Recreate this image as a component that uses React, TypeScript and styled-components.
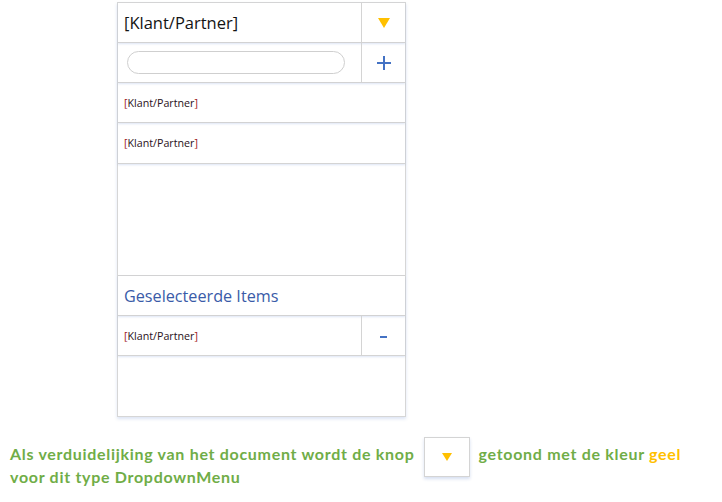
import React from "react";
import styled, { createGlobalStyle } from "styled-components";

const Global = createGlobalStyle`
  html, body { margin: 0; padding: 0; background: #ffffff; }
  body { font-family: "Open Sans", "Noto Sans", sans-serif; }
`;

const Page = styled.div`
  width: 722px;
  height: 502px;
  display: flex;
  flex-direction: column;
  overflow: hidden;
`;

const Panel = styled.div`
  margin: 2px 0 0 117px;
  width: 289px;
  height: 415px;
  box-sizing: border-box;
  border: 1px solid #d6d6d6;
  box-shadow: 0 2px 3px rgba(120, 150, 210, 0.25);
  display: flex;
  flex-direction: column;
`;

const Row = styled.div<{ $h: number }>`
  height: ${(p) => p.$h}px;
  flex: none;
  box-sizing: border-box;
  border-bottom: 1px solid #d4d4d4;
  box-shadow: 0 1px 2px rgba(120, 150, 210, 0.25);
  display: flex;
  align-items: stretch;
`;

const Spacer = styled.div<{ $h: number }>`
  height: ${(p) => p.$h}px;
  flex: none;
  border-bottom: 1px solid #d4d4d4;
  box-sizing: border-box;
`;

const Cell = styled.div`
  flex: 1;
  display: flex;
  align-items: center;
  padding-left: 6px;
  min-width: 0;
`;

const SideButton = styled.div`
  width: 44px;
  flex: none;
  box-sizing: border-box;
  border-left: 1px solid #d4d4d4;
  display: flex;
  align-items: center;
  justify-content: center;
`;

const Title = styled.span`
  font-size: 16.5px;
  color: #141414;
`;

const ItemText = styled.span`
  font-size: 10.7px;
  color: #2a1020;
`;

const Bracket = styled.span`
  color: #a01818;
`;

const SectionTitle = styled.span`
  font-size: 16.2px;
  color: #3a5ba8;
`;

const Search = styled.div`
  width: 218px;
  height: 23px;
  margin-left: 3px;
  box-sizing: border-box;
  border: 1px solid #cfcfcf;
  border-radius: 12px;
  background: #fff;
`;

const Triangle = styled.div<{ $size?: number }>`
  width: 0;
  height: 0;
  border-left: ${(p) => (p.$size ?? 6)}px solid transparent;
  border-right: ${(p) => (p.$size ?? 6)}px solid transparent;
  border-top: ${(p) => Math.round((p.$size ?? 6) * 1.6)}px solid #ffc000;
`;

const Plus = styled.div`
  position: relative;
  width: 14px;
  height: 14px;
  &::before,
  &::after {
    content: "";
    position: absolute;
    background: #4472c4;
  }
  &::before {
    left: 0;
    top: 6px;
    width: 14px;
    height: 2px;
  }
  &::after {
    left: 6px;
    top: 0;
    width: 2px;
    height: 14px;
  }
`;

const Minus = styled.div`
  width: 7px;
  height: 2px;
  background: #4472c4;
  margin-top: 2px;
`;

const Note = styled.p`
  margin: 25px 0 0 10px;
  width: 712px;
  font-family: "Lato", sans-serif;
  font-weight: 700;
  font-size: 16px;
  letter-spacing: 0.7px;
  line-height: 23px;
  color: #70ad47;
  white-space: nowrap;
`;

const InlineButton = styled.span`
  display: inline-flex;
  align-items: center;
  justify-content: center;
  vertical-align: middle;
  width: 46px;
  height: 40px;
  margin: -12px 9px -12px 9px;
  box-sizing: border-box;
  border: 1px solid #d4d4d4;
  box-shadow: 0 2px 3px rgba(120, 150, 210, 0.3);
  position: relative;
  top: 1px;
`;

const Yellow = styled.span`
  color: #ffc000;
`;

const Item = ({ label }: { label: string }) => (
  <ItemText>
    <Bracket>[</Bracket>
    {label}
    <Bracket>]</Bracket>
  </ItemText>
);

export default function App() {
  return (
    <Page>
      <Global />
      <Panel>
        <Row $h={40}>
          <Cell>
            <Title>[Klant/Partner]</Title>
          </Cell>
          <SideButton>
            <Triangle $size={6} />
          </SideButton>
        </Row>
        <Row $h={40}>
          <Cell>
            <Search />
          </Cell>
          <SideButton>
            <Plus />
          </SideButton>
        </Row>
        <Row $h={40}>
          <Cell>
            <Item label="Klant/Partner" />
          </Cell>
        </Row>
        <Row $h={41}>
          <Cell>
            <Item label="Klant/Partner" />
          </Cell>
        </Row>
        <Spacer $h={112} />
        <Row $h={40}>
          <Cell>
            <SectionTitle>Geselecteerde Items</SectionTitle>
          </Cell>
        </Row>
        <Row $h={40}>
          <Cell>
            <Item label="Klant/Partner" />
          </Cell>
          <SideButton>
            <Minus />
          </SideButton>
        </Row>
      </Panel>
      <Note>
        Als verduidelijking van het document wordt de knop
        <InlineButton>
          <Triangle $size={5} />
        </InlineButton>
        getoond met de kleur <Yellow>geel</Yellow>
        <br />
        voor dit type DropdownMenu
      </Note>
    </Page>
  );
}
